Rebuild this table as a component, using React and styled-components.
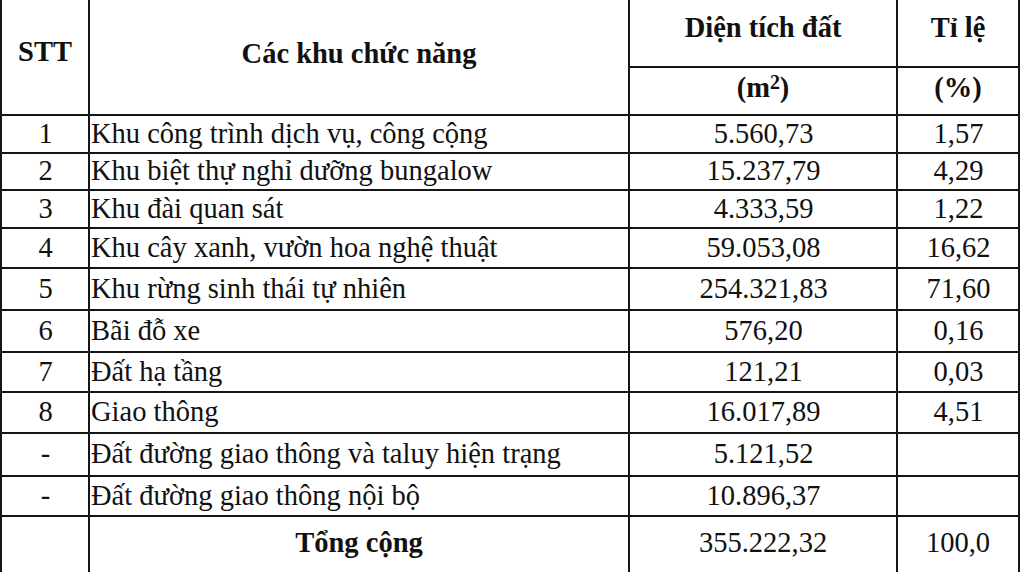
import React from 'react';
import styled, { createGlobalStyle } from 'styled-components';

const GlobalStyle = createGlobalStyle`
  html, body {
    margin: 0;
    padding: 0;
    background: #fff;
  }
  body {
    font-family: "Liberation Serif", "Times New Roman", serif;
    color: #111;
    overflow: hidden;
  }
`;

const rows = [
  { no: '1', name: 'Khu công trình dịch vụ, công cộng', area: '5.560,73', ratio: '1,57', h: 38 },
  { no: '2', name: 'Khu biệt thự nghỉ dưỡng bungalow', area: '15.237,79', ratio: '4,29', h: 37 },
  { no: '3', name: 'Khu đài quan sát', area: '4.333,59', ratio: '1,22', h: 38 },
  { no: '4', name: 'Khu cây xanh, vườn hoa nghệ thuật', area: '59.053,08', ratio: '16,62', h: 40 },
  { no: '5', name: 'Khu rừng sinh thái tự nhiên', area: '254.321,83', ratio: '71,60', h: 42 },
  { no: '6', name: 'Bãi đỗ xe', area: '576,20', ratio: '0,16', h: 42 },
  { no: '7', name: 'Đất hạ tầng', area: '121,21', ratio: '0,03', h: 40 },
  { no: '8', name: 'Giao thông', area: '16.017,89', ratio: '4,51', h: 41 },
  { no: '-', name: 'Đất đường giao thông và taluy hiện trạng', area: '5.121,52', ratio: '', h: 43 },
  { no: '-', name: 'Đất đường giao thông nội bộ', area: '10.896,37', ratio: '', h: 40 },
];

const App = () => {
  return (
    <>
      <GlobalStyle />
      <Table>
        <colgroup>
          <col style={{ width: 88 }} />
          <col style={{ width: 540 }} />
          <col style={{ width: 268 }} />
          <col style={{ width: 122 }} />
        </colgroup>
        <thead>
          <HeadRow $h={67}>
            <HeadCell rowSpan={2} $lift={10}>STT</HeadCell>
            <HeadCell rowSpan={2} $lift={6}>Các khu chức năng</HeadCell>
            <HeadCell $lift={10}>Diện tích đất</HeadCell>
            <HeadCell $lift={10}>Tỉ lệ</HeadCell>
          </HeadRow>
          <HeadRow $h={48}>
            <UnitCell $lift={5}>
              (m<sup>2</sup>)
            </UnitCell>
            <UnitCell $lift={5}>(%)</UnitCell>
          </HeadRow>
        </thead>
        <tbody>
          {rows.map((r, i) => (
            <Row key={i} $h={r.h}>
              <Cell $center>{r.no}</Cell>
              <Cell>{r.name}</Cell>
              <Cell $center>{r.area}</Cell>
              <Cell $center>{r.ratio}</Cell>
            </Row>
          ))}
          <TotalRow>
            <TotalCell />
            <TotalCell $bold>Tổng cộng</TotalCell>
            <TotalCell>355.222,32</TotalCell>
            <TotalCell>100,0</TotalCell>
          </TotalRow>
        </tbody>
      </Table>
    </>
  );
};

export default App;

const Table = styled.table`
  width: 1018px;
  border-collapse: collapse;
  table-layout: fixed;
  font-size: 28.5px;
  line-height: 1;
`;

const HeadRow = styled.tr`
  height: ${(p) => p.$h}px;
`;

const HeadCell = styled.th`
  border: 2px solid #151515;
  border-top: none;
  font-weight: bold;
  text-align: center;
  vertical-align: middle;
  padding: 0 0 ${(p) => p.$lift || 0}px;
`;

const UnitCell = styled(HeadCell)`
  sup {
    font-size: 0.7em;
    vertical-align: 0.42em;
    line-height: 0;
  }
`;

const Row = styled.tr`
  height: ${(p) => p.$h}px;
`;

const Cell = styled.td`
  border: 2px solid #151515;
  padding: 0 0 0 1px;
  text-align: ${(p) => (p.$center ? 'center' : 'left')};
  vertical-align: middle;
  white-space: nowrap;
`;

const TotalRow = styled.tr`
  height: 70px;
`;

const TotalCell = styled.td`
  border: 2px solid #151515;
  border-bottom: none;
  padding: 12px 0 0;
  text-align: center;
  vertical-align: top;
  font-weight: ${(p) => (p.$bold ? 'bold' : 'normal')};
`;
